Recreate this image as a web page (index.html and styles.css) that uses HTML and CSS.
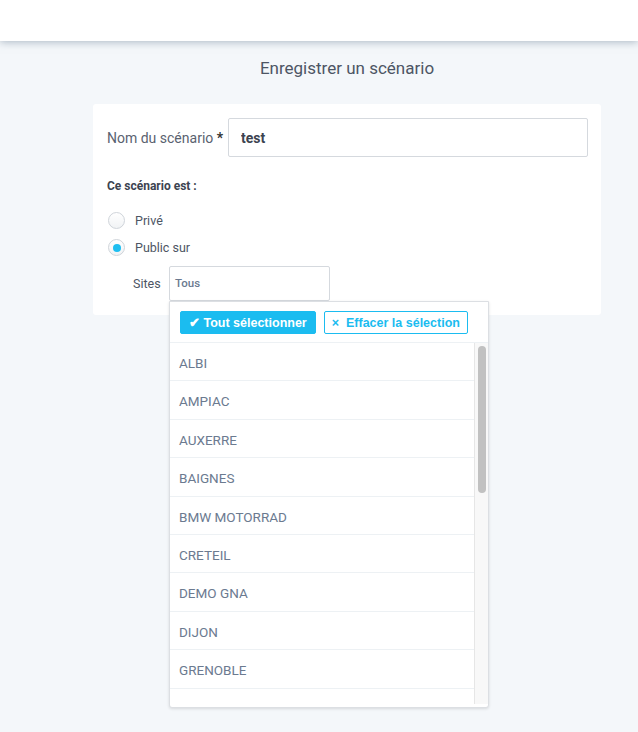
FILE: index.html
```html
<!DOCTYPE html>
<html lang="fr">
<head>
  <meta charset="UTF-8" />
  <title>Enregistrer un scénario</title>
  <meta name="viewport" content="width=device-width, initial-scale=1.0" />
  <link rel="stylesheet" href="styles.css">
</head>
<body>
  <header class="topbar"></header>

  <main class="page">
    <h2 class="title">Enregistrer un scénario</h2>

    <div class="card">
      <div class="field">
        <label for="name" class="field-label">Nom du scénario <b>*</b></label>
        <input type="text" id="name" class="text-input" value="test" />
      </div>

      <div class="section-label">Ce scénario est :</div>

      <label class="radio">
        <span class="radio-dot"></span>
        Privé
      </label>
      <label class="radio">
        <span class="radio-dot checked"></span>
        Public sur
      </label>

      <div class="sites">
        <span class="sites-label">Sites</span>
        <div class="multiselect">
          <div class="select-box">Tous</div>

          <div class="dropdown">
            <div class="dropdown-actions">
              <button class="btn-all">&#10004; Tout sélectionner</button>
              <button class="btn-clear">&times;&nbsp; Effacer la sélection</button>
            </div>
            <div class="list-wrap">
              <ul class="site-list" id="siteList"></ul>
              <div class="scrollbar"><div class="scroll-thumb"></div></div>
            </div>
          </div>
        </div>
      </div>
    </div>
  </main>

  <script>
    const sites = [
      "ALBI", "AMPIAC", "AUXERRE", "BAIGNES", "BMW MOTORRAD", "CRETEIL",
      "DEMO GNA", "DIJON", "GRENOBLE", "LILLE", "LYON", "MARSEILLE",
      "METZ", "MONTPELLIER", "NANCY", "NANTES", "NICE", "PARIS",
      "REIMS", "RENNES", "ROUEN", "STRASBOURG", "TOULOUSE"
    ];

    const list = document.getElementById("siteList");
    sites.forEach(s => {
      const li = document.createElement("li");
      li.textContent = s;
      list.appendChild(li);
    });
  </script>
</body>
</html>
```

FILE: styles.css
```css
* {
  box-sizing: border-box;
}

body {
  margin: 0;
  font-family: Roboto, "Noto Sans", sans-serif;
  background: #f4f7fa;
  color: #5a6270;
  height: 732px;
  overflow: hidden;
}

.topbar {
  height: 41px;
  background: #fff;
  box-shadow: 0 1px 8px rgba(110, 130, 150, 0.55);
  position: relative;
}

.page {
  width: 508px;
  margin-left: 93px;
}

.title {
  margin: 17px 0 0;
  height: 46px;
  text-align: center;
  font-size: 17px;
  font-weight: 400;
  color: #4d5564;
}

.card {
  background: #fff;
  border-radius: 3px;
  padding: 14px 13px 14px 14px;
}

.field {
  display: flex;
  align-items: center;
}

.field-label {
  width: 121px;
  font-size: 14px;
  color: #5a6270;
}

.field-label b {
  color: #333;
}

.text-input {
  flex: 1;
  height: 39px;
  padding: 0 12px;
  border: 1px solid #d5d9de;
  border-radius: 2px;
  font-family: inherit;
  font-size: 14px;
  font-weight: 700;
  color: #3c4350;
}

.section-label {
  margin-top: 22px;
  font-size: 12px;
  font-weight: 700;
  color: #3c4350;
}

.radio {
  display: flex;
  align-items: center;
  font-size: 12.5px;
  color: #4d5564;
  height: 17px;
}

.radio + .radio {
  margin-top: 10px;
}

.section-label + .radio {
  margin-top: 19px;
}

.radio-dot {
  width: 17px;
  height: 17px;
  border-radius: 50%;
  border: 1px solid #cfd4da;
  background: linear-gradient(#fff, #f1f3f5);
  margin-right: 10px;
  margin-left: 1px;
  position: relative;
}

.radio-dot.checked::after {
  content: "";
  position: absolute;
  left: 3.5px;
  top: 3.5px;
  width: 8px;
  height: 8px;
  border-radius: 50%;
  background: #1ebef0;
}

.sites {
  display: flex;
  align-items: center;
  margin-top: 10px;
  padding-left: 26px;
}

.sites-label {
  width: 36px;
  font-size: 12.5px;
  color: #4d5564;
}

.multiselect {
  position: relative;
}

.select-box {
  width: 161px;
  height: 35px;
  border: 1px solid #d5d9de;
  border-radius: 2px;
  padding: 9px 5px;
  font-size: 11.5px;
  font-weight: 500;
  color: #6b7a90;
}

.dropdown {
  position: absolute;
  top: 35px;
  left: 0;
  width: 320px;
  height: 407px;
  background: #fff;
  border: 1px solid #dcdfe3;
  border-radius: 0 0 3px 3px;
  box-shadow: 0 1px 3px rgba(0, 0, 0, 0.12);
  z-index: 10;
  display: flex;
  flex-direction: column;
}

.dropdown-actions {
  display: flex;
  gap: 8px;
  padding: 9px 10px 8px;
  border-bottom: 1px solid #edf1f4;
}

.dropdown-actions button {
  height: 23px;
  font-family: "Liberation Sans", Arial, sans-serif;
  font-size: 12.5px;
  font-weight: 700;
  border-radius: 2px;
  cursor: pointer;
}

.btn-all {
  padding: 0 8px;
  background: #1bbcf0;
  color: #fff;
  border: 1px solid #1bbcf0;
}

.btn-clear {
  padding: 0 7px;
  background: #fff;
  color: #1bbcf0;
  border: 1px solid #1bbcf0;
}

.list-wrap {
  flex: 1;
  display: flex;
  min-height: 0;
  padding-bottom: 3px;
}

.site-list {
  list-style: none;
  margin: 0;
  padding: 0;
  flex: 1;
  overflow: hidden;
}

.site-list li {
  height: 38.4px;
  padding-top: 4px;
  line-height: 33.4px;
  padding-left: 9px;
  border-bottom: 1px solid #edf1f4;
  font-size: 13.5px;
  color: #6b7a90;
}

.scrollbar {
  width: 14px;
  background: #f8f8f8;
  border-left: 1px solid #e6e6e6;
  padding: 3px 2px 0 3px;
}

.scroll-thumb {
  height: 147px;
  background: #c1c1c1;
  border-radius: 4px;
}
```
